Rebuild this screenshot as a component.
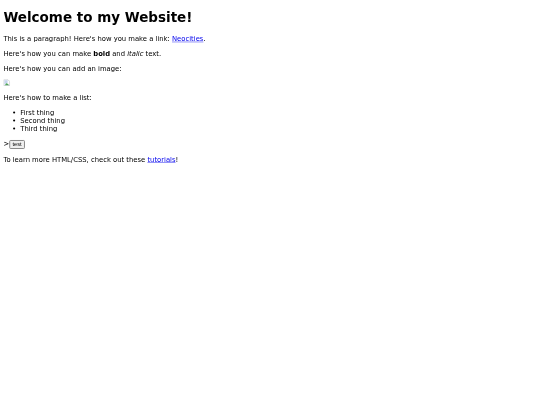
<style>
  :global(body) { margin: 0; background: #fff; }
  .frame { width: 540px; height: 405px; overflow: hidden; filter: blur(0.3px); }
  .page { width: 1280px; box-sizing: border-box; padding: 8px; transform: scale(0.421875); transform-origin: 0 0; font-family: "DejaVu Sans", sans-serif; font-size: 16.15px; color: #000; }
  h1 { font-size: 32px; margin: 13.4px 0 23.6px; font-weight: 700; }
  p { margin: 16px 0; }
  .img-row { height: 18px; }
  a { color: #0000ee; text-decoration: underline; }
  .broken { display: block; width: 16px; height: 16px; }
  ul { margin: 16px 0 18px; padding-left: 40px; list-style: disc; }
  button { font-family: "Liberation Sans", sans-serif; font-size: 13.33px; padding: 1px 6px; border: 2px solid #767676; border-radius: 3px; background: #efefef; color: #000; }
</style>

<div class="frame">
  <div class="page">
    <h1>Welcome to my Website!</h1>
    <p>This is a paragraph! Here's how you make a link: <a href="#top">Neocities</a>.</p>
    <p>Here's how you can make <strong>bold</strong> and <em>italic</em> text.</p>
    <p>Here's how you can add an image:</p>
    <p class="img-row">
      <svg class="broken" viewBox="0 0 16 16" aria-hidden="true">
        <path d="M1 1H11L15 5V15H1Z" fill="#fff" stroke="#b4b8c0" stroke-width="1.4"/>
        <path d="M2.5 2.5H10V8L2.5 12Z" fill="#c5d4ee"/>
        <path d="M3 14L8 9L14 14Z" fill="#4fa35a"/>
      </svg>
    </p>
    <p>Here's how to make a list:</p>
    <ul>
      <li>First thing</li>
      <li>Second thing</li>
      <li>Third thing</li>
    </ul>
    <p>&gt;<button>test</button></p>
    <p>To learn more HTML/CSS, check out these <a href="#top">tutorials</a>!</p>
  </div>
</div>
